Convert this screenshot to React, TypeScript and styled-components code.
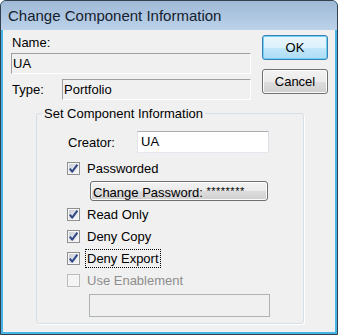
import React from 'react'
import styled, { createGlobalStyle } from 'styled-components'

const GlobalStyle = createGlobalStyle`
  html, body { margin: 0; padding: 0; background: #fff; }
  body { font-family: 'Liberation Sans', Arial, sans-serif; font-size: 13px; color: #000; }
  * { box-sizing: border-box; }
`

const Window = styled.div`
  width: 338px;
  height: 335px;
  border: 1px solid #34404d;
  border-radius: 6px 6px 0 0;
  background: #45b5e6;
  display: flex;
  flex-direction: column;
  overflow: hidden;
`

const TitleBar = styled.div`
  height: 29px;
  flex: none;
  display: flex;
  align-items: center;
  padding-left: 7px;
  background: linear-gradient(#9fb9d6, #bcd2ea);
  font-size: 15px;
  color: #14202e;
`

const Client = styled.div`
  flex: 1;
  margin: 0 2px 2px;
  background: #f0f0f0;
  padding: 5px 0 0 8px;
  line-height: 15px;
`

const TopArea = styled.div`
  display: grid;
  grid-template-columns: 240px 66px;
  column-gap: 11px;
`

const LeftCol = styled.div`
  display: flex;
  flex-direction: column;
`

const RightCol = styled.div`
  display: flex;
  flex-direction: column;
  gap: 9px;
`

const Label = styled.div<{ $width?: number }>`
  margin-left: 1px;
  flex: none;
  width: ${(p) => (p.$width ? `${p.$width}px` : 'auto')};
`

const StaticField = styled.div<{ $top?: number }>`
  height: 21px;
  margin-top: ${(p) => p.$top ?? 0}px;
  border-style: solid;
  border-width: 1px;
  border-color: #a0a0a0 #fff #fff #a0a0a0;
  padding-left: 1px;
  line-height: 19px;
  flex: 1;
`

const TypeRow = styled.div`
  display: flex;
  align-items: center;
  margin-top: 5px;
`

const PushButton = styled.button<{ $default?: boolean }>`
  width: 66px;
  height: 25px;
  padding: 0;
  border-radius: 3px;
  font-family: 'Liberation Sans', Arial, sans-serif;
  font-size: 13px;
  color: #000;
  border: 1px solid ${(p) => (p.$default ? '#3c7fb1' : '#707070')};
  background: ${(p) =>
    p.$default
      ? 'linear-gradient(#e9f6fd 0%, #dcf1fc 50%, #c2e7fb 51%, #aedcf5 100%)'
      : 'linear-gradient(#f2f2f2 0%, #ebebeb 50%, #dddddd 51%, #cfcfcf 100%)'};
  box-shadow: inset 0 0 0 1px ${(p) => (p.$default ? '#6fd0f6' : '#fbfbfb')};
`

const GroupBox = styled.fieldset`
  width: 268px;
  margin: 6px 0 0 25px;
  padding: 0 0 6px 0;
  border: 1px solid #d5dfe5;
  border-radius: 3px;
  box-shadow: 1px 1px 0 #fff;
  min-width: 0;
`

const GroupTitle = styled.legend`
  margin-left: 5px;
  padding: 0 2px;
  line-height: 15px;
`

const GroupBody = styled.div`
  padding-left: 30px;
  display: flex;
  flex-direction: column;
`

const CreatorRow = styled.div`
  display: flex;
  align-items: center;
  height: 22px;
  margin-top: 10px;
`

const TextInput = styled.div`
  width: 132px;
  height: 22px;
  background: #fff;
  border: 1px solid;
  border-color: #abadb3 #dbdfe6 #e3e9ef #e2e3ea;
  padding-left: 3px;
  line-height: 20px;
`

const CheckRow = styled.div<{ $top?: number; $disabled?: boolean }>`
  display: flex;
  align-items: center;
  height: 22px;
  margin-top: ${(p) => p.$top ?? 0}px;
  color: ${(p) => (p.$disabled ? '#8d8d8d' : '#000')};
`

const CheckLabel = styled.span<{ $focused?: boolean }>`
  margin-left: ${(p) => (p.$focused ? 5 : 7)}px;
  padding: ${(p) => (p.$focused ? '1px 1px' : '0')};
  border: ${(p) => (p.$focused ? '1px dotted #000' : 'none')};
`

const WideButton = styled.div`
  width: 178px;
  height: 20px;
  margin: 2px 0 0 23px;
  border: 1px solid #707070;
  border-radius: 3px;
  background: linear-gradient(#f2f2f2 0%, #ebebeb 50%, #dddddd 51%, #cfcfcf 100%);
  box-shadow: inset 0 0 0 1px #fbfbfb;
  padding-left: 2px;
  line-height: 18px;
  white-space: nowrap;
`

const Mask = styled.span`
  font-size: 11px;
  letter-spacing: 0.5px;
  vertical-align: 2px;
`

const DisabledField = styled.div`
  width: 181px;
  height: 23px;
  margin: 3px 0 0 22px;
  border: 1px solid #adb2b5;
  background: #f0f0f0;
`

const CheckBox: React.FC<{ checked?: boolean; disabled?: boolean }> = ({ checked, disabled }) => (
  <svg width="13" height="13" viewBox="0 0 13 13" style={{ flex: 'none' }}>
    <defs>
      <linearGradient id="cbFill" x1="0" y1="0" x2="1" y2="1">
        <stop offset="0" stopColor="#c9ced6" />
        <stop offset="1" stopColor="#f6f7f8" />
      </linearGradient>
    </defs>
    <rect x="0.5" y="0.5" width="12" height="12" fill="#f6f6f6" stroke={disabled ? '#bcbcbc' : '#8e8f8f'} />
    <rect x="2" y="2" width="9" height="9" fill={disabled ? '#f4f4f4' : 'url(#cbFill)'} />
    {checked && (
      <path d="M2.8 6.6 L5.2 9.6 L10.4 2.6" fill="none" stroke="#2f4785" strokeWidth="2" strokeLinejoin="round" />
    )}
  </svg>
)

const options = [
  { label: 'Read Only', checked: true },
  { label: 'Deny Copy', checked: true },
  { label: 'Deny Export', checked: true, focused: true },
  { label: 'Use Enablement', checked: false, disabled: true },
]

export default function App() {
  return (
    <>
      <GlobalStyle />
      <Window>
        <TitleBar>Change Component Information</TitleBar>
        <Client>
          <TopArea>
            <LeftCol>
              <Label>Name:</Label>
              <StaticField $top={3}>UA</StaticField>
              <TypeRow>
                <Label $width={50}>Type:</Label>
                <StaticField>Portfolio</StaticField>
              </TypeRow>
            </LeftCol>
            <RightCol>
              <PushButton $default>OK</PushButton>
              <PushButton>Cancel</PushButton>
            </RightCol>
          </TopArea>
          <GroupBox>
            <GroupTitle>Set Component Information</GroupTitle>
            <GroupBody>
              <CreatorRow>
                <Label $width={69}>Creator:</Label>
                <TextInput>UA</TextInput>
              </CreatorRow>
              <CheckRow $top={4}>
                <CheckBox checked />
                <CheckLabel>Passworded</CheckLabel>
              </CheckRow>
              <WideButton>
                Change Password: <Mask>********</Mask>
              </WideButton>
              {options.map((o, i) => (
                <CheckRow key={o.label} $top={i === 0 ? 2 : 0} $disabled={o.disabled}>
                  <CheckBox checked={o.checked} disabled={o.disabled} />
                  <CheckLabel $focused={o.focused}>{o.label}</CheckLabel>
                </CheckRow>
              ))}
              <DisabledField />
            </GroupBody>
          </GroupBox>
        </Client>
      </Window>
    </>
  )
}
